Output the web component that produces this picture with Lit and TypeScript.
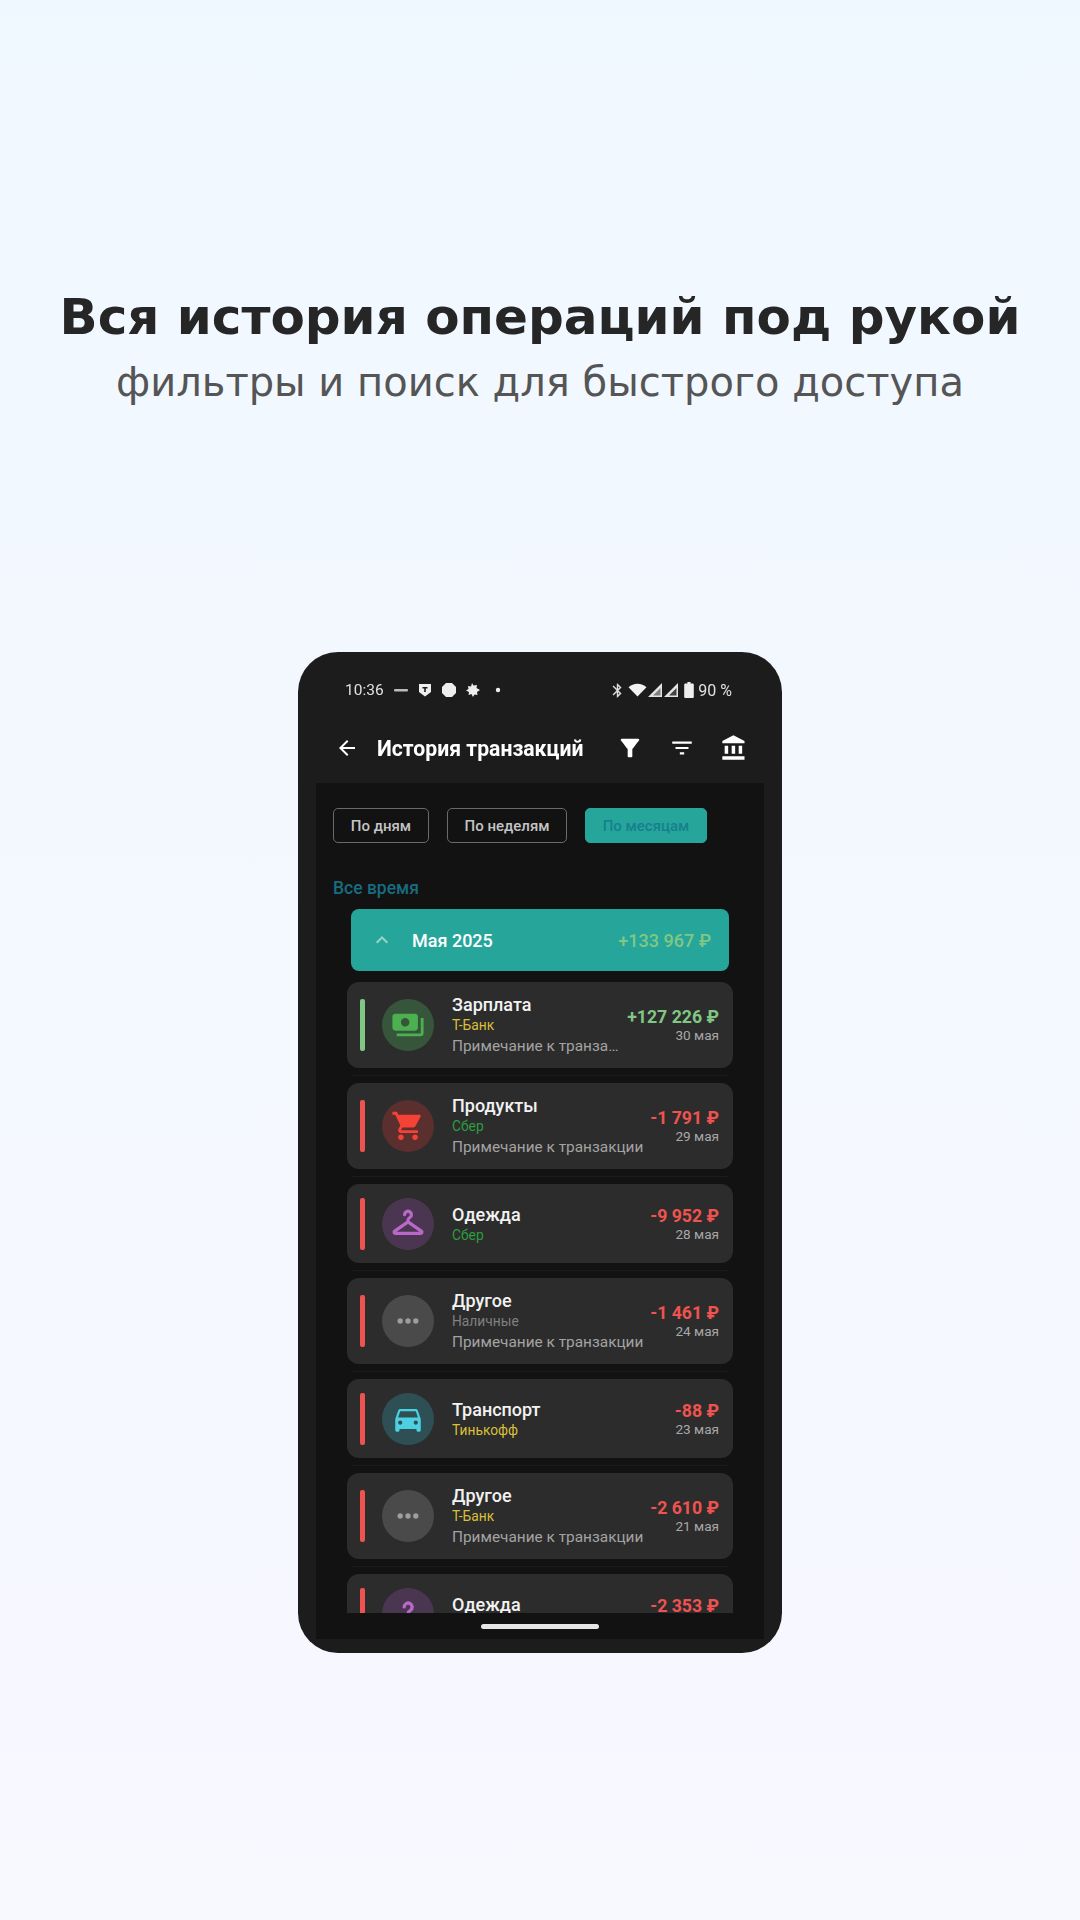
import {css, html, LitElement, svg, nothing, type SVGTemplateResult} from 'lit';
import {customElement} from 'lit/decorators.js';

interface Tx {
    title: string;
    bank: string;
    bankColor: string;
    note?: string;
    amount: string;
    date: string;
    color: string;
    icon: SVGTemplateResult;
    iconBg: string;
}

const YELLOW = '#d9bf3a';
const GREEN = '#2e9c3f';
const NOTE = 'Примечание к транзакции';

const money = svg`<path fill="#4caf50" d="M19 14V6c0-1.1-.9-2-2-2H3c-1.1 0-2 .9-2 2v8c0 1.1.9 2 2 2h14c1.1 0 2-.9 2-2zm-9-1c-1.66 0-3-1.34-3-3s1.34-3 3-3 3 1.34 3 3-1.34 3-3 3zm13-6v11c0 1.1-.9 2-2 2H4v-2h17V7h2z"/>`;
const cart = svg`<path fill="#f44336" d="M7 18c-1.1 0-1.99.9-1.99 2S5.9 22 7 22s2-.9 2-2-.9-2-2-2zM1 2v2h2l3.6 7.59-1.35 2.45c-.16.28-.25.61-.25.96 0 1.1.9 2 2 2h12v-2H7.42c-.14 0-.25-.11-.25-.25l.03-.12.9-1.63h7.45c.75 0 1.41-.41 1.75-1.03l3.58-6.49c.08-.14.12-.31.12-.48 0-.55-.45-1-1-1H5.21l-.94-2H1zm16 16c-1.1 0-1.99.9-1.99 2s.89 2 1.99 2 2-.9 2-2-.9-2-2-2z"/>`;
const hanger = svg`<path fill="none" stroke="#ba68c8" stroke-width="2.3" stroke-linejoin="round" stroke-linecap="round" d="M9.6 5.4a2.4 2.4 0 1 1 3.6 2.1c-.8.4-1.2.9-1.2 1.8v1.2L21.4 17c.8.6.4 1.6-.5 1.6H3.100c-.9 0-1.300-1-.5-1.600L12 10.500"/>`;
const dots = svg`<g fill="#9e9e9e"><circle cx="6.500" cy="12" r="1.900"/><circle cx="12" cy="12" r="1.900"/><circle cx="17.500" cy="12" r="1.900"/></g>`;
const car = svg`<path fill="#4dd0e1" d="M18.92 6.01C18.72 5.42 18.16 5 17.5 5h-11c-.66 0-1.21.42-1.42 1.01L3 12v8c0 .55.45 1 1 1h1c.55 0 1-.45 1-1v-1h12v1c0 .55.45 1 1 1h1c.55 0 1-.45 1-1v-8l-2.08-5.99zM6.5 16c-.83 0-1.5-.67-1.5-1.5S5.67 13 6.5 13s1.5.67 1.5 1.5S7.33 16 6.5 16zm11 0c-.83 0-1.5-.67-1.5-1.5s.67-1.5 1.5-1.5 1.5.67 1.5 1.5-.67 1.5-1.5 1.5zM5 11l1.5-4.500h11L19 11H5z"/>`;
const question = svg`<path fill="none" stroke="#ba68c8" stroke-width="2.400" stroke-linecap="round" d="M9.300 7a2.800 2.800 0 1 1 4.400 2.400c-1.100.7-1.700 1.300-1.700 2.700"/><circle cx="12" cy="15.800" r="1.500" fill="#ba68c8"/>`;

const TXS: Tx[] = [
    {title: 'Зарплата', bank: 'Т-Банк', bankColor: YELLOW, note: 'Примечание к транзакции к зарплате', amount: '+127 226 ₽', date: '30 мая', color: '#81c784', icon: money, iconBg: '#37553a'},
    {title: 'Продукты', bank: 'Сбер', bankColor: GREEN, note: NOTE, amount: '-1 791 ₽', date: '29 мая', color: '#ef5350', icon: cart, iconBg: '#5a2f2d'},
    {title: 'Одежда', bank: 'Сбер', bankColor: GREEN, amount: '-9 952 ₽', date: '28 мая', color: '#ef5350', icon: hanger, iconBg: '#4a3650'},
    {title: 'Другое', bank: 'Наличные', bankColor: '#808080', note: NOTE, amount: '-1 461 ₽', date: '24 мая', color: '#ef5350', icon: dots, iconBg: '#4a4a4a'},
    {title: 'Транспорт', bank: 'Тинькофф', bankColor: YELLOW, amount: '-88 ₽', date: '23 мая', color: '#ef5350', icon: car, iconBg: '#2e5055'},
    {title: 'Другое', bank: 'Т-Банк', bankColor: YELLOW, note: NOTE, amount: '-2 610 ₽', date: '21 мая', color: '#ef5350', icon: dots, iconBg: '#4a4a4a'},
    {title: 'Одежда', bank: 'Сбер', bankColor: GREEN, amount: '-2 353 ₽', date: '20 мая', color: '#ef5350', icon: question, iconBg: '#4a3650'},
];

@customElement('app-root')
export class AppRoot extends LitElement {

    static styles = css`
        :host {
            display: block;
            width: 1080px;
            height: 1920px;
            overflow: hidden;
            background: linear-gradient(180deg, #f0f8ff, #f8f8ff);
            font-family: Roboto, sans-serif;
        }
        .hero {
            height: 652px;
            box-sizing: border-box;
            padding-top: 286px;
            text-align: center;
            font-family: "DejaVu Sans", sans-serif;
        }
        .hero h1 {
            margin: 0;
            font-size: 50px;
            line-height: 62px;
            font-weight: 700;
            color: #262626;
        }
        .hero p {
            margin: 4px 0 0;
            font-size: 40px;
            line-height: 60px;
            color: #555;
        }
        .phone {
            width: 484px;
            height: 1001px;
            margin: 0 auto;
            box-sizing: border-box;
            padding: 0 18px 14px;
            display: flex;
            flex-direction: column;
            background: #1c1c1c;
            border-radius: 40px;
            overflow: hidden;
            filter: blur(0.45px);
        }
        .status {
            height: 64px;
            flex: none;
            box-sizing: border-box;
            padding: 26px 32px 0 29px;
            display: flex;
            align-items: flex-start;
            justify-content: space-between;
            color: #e0e0e0;
        }
        .status-group {
            display: flex;
            align-items: center;
            height: 24px;
        }
        .time {
            font-size: 15.500px;
            margin-right: 9px;
        }
        .pct {
            font-size: 16px;
            margin-left: 4px;
        }
        .appbar {
            height: 67px;
            flex: none;
            box-sizing: border-box;
            display: flex;
            align-items: center;
            padding-bottom: 3px;
        }
        .appbar svg {
            display: block;
            fill: #fff;
        }
        .back {
            margin-left: 19px;
        }
        .appbar h2 {
            margin: 0 0 0 18px;
            font-size: 21.200px;
            font-weight: 700;
            color: #fff;
            flex: 1;
        }
        .actions {
            display: flex;
            align-items: center;
            gap: 25px;
            margin-right: 16px;
        }
        .screen {
            flex: 1;
            min-height: 0;
            display: flex;
            flex-direction: column;
            background: #121212;
        }
        .chips {
            display: flex;
            gap: 18px;
            padding: 25px 0 0 17px;
            flex: none;
        }
        .chip {
            box-sizing: border-box;
            height: 35px;
            display: flex;
            align-items: center;
            justify-content: center;
            border: 1px solid #6a6a6a;
            border-radius: 5px;
            font-size: 15px;
            font-weight: 500;
            color: #c4c4c4;
        }
        .chip.on {
            background: #26a69a;
            border-color: #26a69a;
            color: #17808f;
        }
        .period {
            flex: none;
            margin: 34px 0 0 17px;
            font-size: 17.500px;
            line-height: 22px;
            font-weight: 500;
            color: #186c80;
        }
        .list {
            flex: 1;
            min-height: 0;
            overflow: hidden;
            padding: 10px 31px 0;
            display: flex;
            flex-direction: column;
        }
        .month {
            flex: none;
            height: 62px;
            margin: 0 4px 11px;
            box-sizing: border-box;
            padding: 0 18px 0 19px;
            display: flex;
            align-items: center;
            border-radius: 8px;
            background: #26a69a;
            font-size: 18px;
            font-weight: 500;
            color: #fff;
        }
        .month svg {
            display: block;
            fill: #9bd4cc;
            margin-right: 18px;
        }
        .month .sum {
            margin-left: auto;
            color: #81c784;
        }
        .card {
            flex: none;
            box-sizing: border-box;
            height: 79px;
            margin-bottom: 15px;
            padding: 0 14px 0 13px;
            display: flex;
            align-items: center;
            background: #2c2c2c;
            border-radius: 12px;
            position: relative;
        }
        .card.has-note {
            height: 86px;
        }
        .card::after {
            content: "";
            position: absolute;
            left: 4px;
            right: 4px;
            bottom: -8px;
            height: 1px;
            background: #1b1b1b;
        }
        .bar {
            width: 5px;
            height: 52px;
            border-radius: 2px;
            flex: none;
        }
        .circle {
            width: 52px;
            height: 52px;
            margin: 0 18px 0 17px;
            border-radius: 50%;
            flex: none;
            display: flex;
            align-items: center;
            justify-content: center;
        }
        .circle svg {
            display: block;
        }
        .info {
            flex: 1;
            min-width: 0;
        }
        .name {
            font-size: 18px;
            line-height: 20px;
            margin-bottom: 2px;
            font-weight: 500;
            color: #f2f2f2;
        }
        .bank {
            font-size: 13.800px;
            line-height: 16px;
        }
        .note {
            margin-top: 3px;
            font-size: 15.400px;
            line-height: 20px;
            color: #a3a3a3;
            white-space: nowrap;
            overflow: hidden;
            text-overflow: ellipsis;
        }
        .right {
            flex: none;
            margin-left: 5px;
            text-align: right;
        }
        .amount {
            font-size: 17.700px;
            line-height: 20px;
            font-weight: 700;
            white-space: nowrap;
        }
        .date {
            font-size: 13.600px;
            line-height: 16px;
            color: #a8a8a8;
        }
        .nav {
            flex: none;
            height: 26px;
            display: flex;
            align-items: center;
            justify-content: center;
        }
        .nav span {
            width: 118px;
            height: 5px;
            border-radius: 3px;
            background: #e6e6e6;
        }
    `;

    private icon(d: string, size = 24) {
        return html`<svg width=${size} height=${size} viewBox="0 0 24 24"><path d=${d}></path></svg>`;
    }

    private renderStatus() {
        return html`
            <div class="status">
                <div class="status-group">
                    <span class="time">10:36</span>
                    <svg width="16" height="16" viewBox="0 0 16 16"><rect x="1" y="7" width="14" height="2.400" rx="1" fill="#bbb"></rect></svg>
                    <svg width="16" height="16" viewBox="0 0 16 16" style="margin-left:8px"><path fill="#eee" d="M2 2h12v8l-6 4.500L2 10z"></path><path fill="#1c1c1c" d="M5.500 5h5v1.600H8.800V10H7.200V6.600H5.500z"></path></svg>
                    <svg width="16" height="16" viewBox="0 0 16 16" style="margin-left:8px"><path fill="#eee" d="M5 1h6l4 4v6l-4 4H5l-4-4V5z"></path></svg>
                    <svg width="16" height="16" viewBox="0 0 16 16" style="margin-left:8px"><path fill="#eee" d="M7 1l1.500 2.500L12 3l-.5 3L15 8l-3 2 .5 3-3-.5L8 15l-1.500-3L3.500 13 4 10 1 8.500 3.500 7 3 4l3 .5z"></path></svg>
                    <svg width="6" height="6" viewBox="0 0 6 6" style="margin-left:14px"><circle cx="3" cy="3" r="2.200" fill="#eee"></circle></svg>
                </div>
                <div class="status-group">
                    <svg width="17" height="17" viewBox="0 0 24 24"><path fill="#ddd" d="M17.710 7.710L12 2h-1v7.590L6.410 5 5 6.410 10.590 12 5 17.590 6.410 19 11 14.410V22h1l5.710-5.710-4.300-4.290 4.300-4.290zM13 5.830l1.880 1.880L13 9.590V5.830zm1.880 10.460L13 18.170v-3.760l1.880 1.880z"></path></svg>
                    <svg width="19" height="16" viewBox="0 0 19 16" style="margin-left:2px"><path fill="#f2f2f2" d="M9.500 14.500L.5 5.200C3 3 6 1.800 9.500 1.800s6.500 1.200 9 3.400z"></path></svg>
                    <svg width="16" height="16" viewBox="0 0 16 16"><path fill="#e4e4e4" d="M15 1v14H1z"></path><path fill="#1c1c1c" d="M13.500 6v7.500H6z" opacity="0.500"></path></svg>
                    <svg width="16" height="16" viewBox="0 0 16 16"><path fill="#e4e4e4" d="M15 1v14H1z"></path><path fill="#1c1c1c" d="M13.500 6v7.500H6z" opacity="0.800"></path></svg>
                    <svg width="10" height="16" viewBox="0 0 9 15" style="margin-left:5px"><path fill="#eee" d="M3 0h3v1.500h2a1 1 0 0 1 1 1V14a1 1 0 0 1-1 1H1a1 1 0 0 1-1-1V2.500a1 1 0 0 1 1-1h2z"></path></svg>
                    <span class="pct">90 %</span>
                </div>
            </div>
        `;
    }

    private renderCard(tx: Tx) {
        return html`
            <div class="card ${tx.note ? 'has-note' : ''}">
                <div class="bar" style="background:${tx.color}"></div>
                <div class="circle" style="background:${tx.iconBg}">
                    <svg width="34" height="34" viewBox="0 0 24 24">${tx.icon}</svg>
                </div>
                <div class="info">
                    <div class="name">${tx.title}</div>
                    <div class="bank" style="color:${tx.bankColor}">${tx.bank}</div>
                    ${tx.note ? html`<div class="note">${tx.note}</div>` : nothing}
                </div>
                <div class="right">
                    <div class="amount" style="color:${tx.color}">${tx.amount}</div>
                    <div class="date">${tx.date}</div>
                </div>
            </div>
        `;
    }

    render() {
        return html`
            <div class="hero">
                <h1>Вся история операций под рукой</h1>
                <p>фильтры и поиск для быстрого доступа</p>
            </div>
            <div class="phone">
                ${this.renderStatus()}
                <div class="appbar">
                    <div class="back">${this.icon('M20 11H7.830l5.590-5.590L12 4l-8 8 8 8 1.410-1.410L7.830 13H20v-2z', 24)}</div>
                    <h2>История транзакций</h2>
                    <div class="actions">
                        ${this.icon('M4.250 5.610C6.270 8.200 10 13 10 13v6c0 .55.45 1 1 1h2c.55 0 1-.45 1-1v-6s3.720-4.800 5.740-7.390c.51-.66.04-1.610-.79-1.610H5.040c-.83 0-1.300.95-.79 1.610z', 28)}
                        ${this.icon('M10 18h4v-2h-4v2zM3 6v2h18V6H3zm3 7h12v-2H6v2z', 26)}
                        ${this.icon('M4 10v7h3v-7H4zm6 0v7h3v-7h-3zM2 22h19v-3H2v3zm14-12v7h3v-7h-3zm-4.500-9L2 6v2h19V6l-9.500-5z', 28)}
                    </div>
                </div>
                <div class="screen">
                    <div class="chips">
                        <div class="chip" style="width:96px">По дням</div>
                        <div class="chip" style="width:120px">По неделям</div>
                        <div class="chip on" style="width:122px">По месяцам</div>
                    </div>
                    <div class="period">Все время</div>
                    <div class="list">
                        <div class="month">
                            <svg width="24" height="24" viewBox="0 0 24 24"><path d="M12 8l-6 6 1.410 1.410L12 10.830l4.590 4.580L18 14z"></path></svg>
                            <span>Мая 2025</span>
                            <span class="sum">+133 967 ₽</span>
                        </div>
                        ${TXS.map((tx) => this.renderCard(tx))}
                    </div>
                    <div class="nav"><span></span></div>
                </div>
            </div>
        `;
    }
}
